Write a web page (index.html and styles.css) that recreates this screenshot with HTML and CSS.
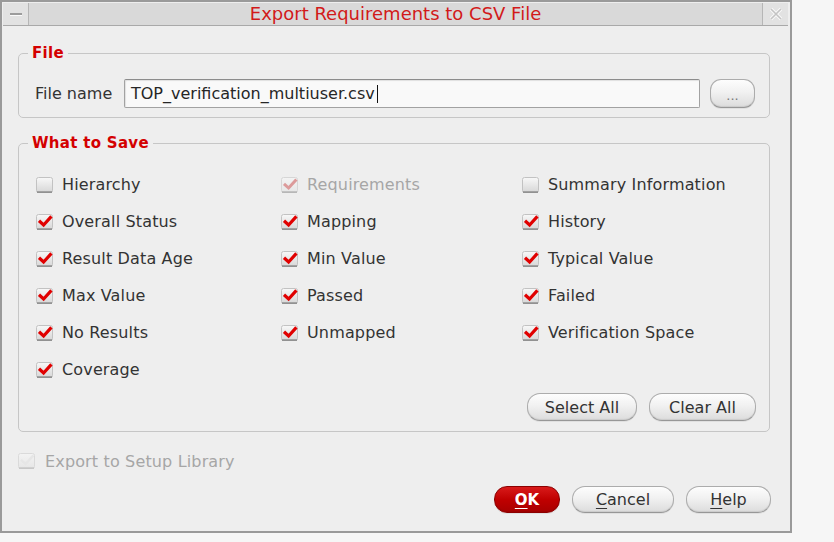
FILE: index.html
```html
<!DOCTYPE html>
<html lang="en">
<head>
<meta charset="utf-8">
<title>Export Requirements to CSV File</title>
<link rel="stylesheet" href="styles.css">
</head>
<body>
<svg class="defs" aria-hidden="true" width="0" height="0">
  <defs>
    <linearGradient id="g-cb" x1="0" y1="0" x2="0" y2="1">
      <stop offset="0" stop-color="#f8f8f8"/>
      <stop offset="1" stop-color="#d6d6d6"/>
    </linearGradient>
    <linearGradient id="g-cb-dis" x1="0" y1="0" x2="0" y2="1">
      <stop offset="0" stop-color="#f3f3f3"/>
      <stop offset="1" stop-color="#e6e6e6"/>
    </linearGradient>
    <symbol id="cb-off" viewBox="0 0 17 16">
      <rect x="0.5" y="0.5" width="16" height="15" rx="2" fill="url(#g-cb)" stroke="#c2c2c2"/>
      <path d="M1 15.1 H16" stroke="#8c8c8c" stroke-width="1.6"/>
    </symbol>
    <symbol id="cb-on" viewBox="0 0 17 16">
      <rect x="0.5" y="0.5" width="16" height="15" rx="2" fill="url(#g-cb)" stroke="#c2c2c2"/>
      <path d="M1 15.1 H16" stroke="#8c8c8c" stroke-width="1.6"/>
      <path d="M3 6.8 L7.6 11 L15.4 2.4" fill="none" stroke="#e00000" stroke-width="3.2"/>
    </symbol>
    <symbol id="cb-on-dis" viewBox="0 0 17 16">
      <rect x="0.5" y="0.5" width="16" height="15" rx="2" fill="url(#g-cb-dis)" stroke="#d6d6d6"/>
      <path d="M1 15.1 H16" stroke="#b4b4b4" stroke-width="1.6"/>
      <path d="M3 6.8 L7.6 11 L15.4 2.4" fill="none" stroke="#dc9a9a" stroke-width="3"/>
    </symbol>
    <symbol id="cb-off-dis" viewBox="0 0 17 16">
      <rect x="0.5" y="0.5" width="16" height="15" rx="2" fill="url(#g-cb-dis)" stroke="#dadada"/>
      <path d="M1 15.1 H16" stroke="#c6c6c6" stroke-width="1.6"/>
      <path d="M3 6.8 L7.6 11 L15.4 2.4" fill="none" stroke="#e6e6e6" stroke-width="2.4"/>
    </symbol>
  </defs>
</svg>

<div class="dialog">
  <div class="titlebar">
    <div class="tb-btn tb-min"><span class="min-glyph"></span></div>
    <div class="title">Export Requirements to CSV File</div>
    <div class="tb-btn tb-close">
      <svg width="16" height="16" viewBox="0 0 16 16"><path d="M3 3 L13 13 M13 3 L3 13" stroke="#fafafa" stroke-width="3.4"/><path d="M3 3 L13 13 M13 3 L3 13" stroke="#c4c4c4" stroke-width="1.6"/></svg>
    </div>
  </div>

  <div class="content">
    <fieldset class="group group-file">
      <legend>File</legend>
      <div class="file-row">
        <span class="field-label">File name</span>
        <div class="input"><span>TOP_verification_multiuser.csv</span><span class="caret"></span></div>
        <button class="btn btn-browse">...</button>
      </div>
    </fieldset>

    <fieldset class="group group-save">
      <legend>What to Save</legend>
      <div class="check-grid">
        <div class="check"><svg class="cb"><use href="#cb-off"/></svg><span>Hierarchy</span></div>
        <div class="check disabled"><svg class="cb"><use href="#cb-on-dis"/></svg><span>Requirements</span></div>
        <div class="check"><svg class="cb"><use href="#cb-off"/></svg><span>Summary Information</span></div>

        <div class="check"><svg class="cb"><use href="#cb-on"/></svg><span>Overall Status</span></div>
        <div class="check"><svg class="cb"><use href="#cb-on"/></svg><span>Mapping</span></div>
        <div class="check"><svg class="cb"><use href="#cb-on"/></svg><span>History</span></div>

        <div class="check"><svg class="cb"><use href="#cb-on"/></svg><span>Result Data Age</span></div>
        <div class="check"><svg class="cb"><use href="#cb-on"/></svg><span>Min Value</span></div>
        <div class="check"><svg class="cb"><use href="#cb-on"/></svg><span>Typical Value</span></div>

        <div class="check"><svg class="cb"><use href="#cb-on"/></svg><span>Max Value</span></div>
        <div class="check"><svg class="cb"><use href="#cb-on"/></svg><span>Passed</span></div>
        <div class="check"><svg class="cb"><use href="#cb-on"/></svg><span>Failed</span></div>

        <div class="check"><svg class="cb"><use href="#cb-on"/></svg><span>No Results</span></div>
        <div class="check"><svg class="cb"><use href="#cb-on"/></svg><span>Unmapped</span></div>
        <div class="check"><svg class="cb"><use href="#cb-on"/></svg><span>Verification Space</span></div>

        <div class="check"><svg class="cb"><use href="#cb-on"/></svg><span>Coverage</span></div>
      </div>
      <div class="group-actions">
        <button class="btn btn-select">Select All</button>
        <button class="btn btn-clear">Clear All</button>
      </div>
    </fieldset>

    <div class="check export disabled"><svg class="cb"><use href="#cb-off-dis"/></svg><span>Export to Setup Library</span></div>

    <div class="dialog-actions">
      <button class="btn btn-ok"><u>O</u>K</button>
      <button class="btn btn-cancel"><u>C</u>ancel</button>
      <button class="btn btn-help"><u>H</u>elp</button>
    </div>
  </div>
</div>
</body>
</html>
```

FILE: styles.css
```css
html, body {
  margin: 0;
  padding: 0;
  background: #f6f6f6;
}

.defs {
  position: absolute;
  width: 0;
  height: 0;
  overflow: hidden;
}

.dialog {
  width: 792px;
  height: 533px;
  box-sizing: border-box;
  border: 2px solid #9a9a9a;
  background: #eeeeee;
  display: flex;
  flex-direction: column;
  font-family: "DejaVu Sans", sans-serif;
}

.titlebar {
  display: flex;
  height: 22px;
  margin: 1px 2px 0 1px;
  background: #d9d9d9;
  border-bottom: 1px solid #a9a9a9;
}

.tb-btn {
  width: 25px;
  flex: none;
  display: flex;
  align-items: center;
  justify-content: center;
  background: #e2e2e2;
}

.tb-min {
  border-right: 1px solid #b6b6b6;
}

.tb-close {
  border-left: 1px solid #b6b6b6;
}

.min-glyph {
  display: block;
  width: 12px;
  height: 2px;
  background: #9c9c9c;
  border-bottom: 1px solid #fafafa;
}

.title {
  flex: 1;
  text-align: center;
  font-size: 18px;
  line-height: 22px;
  color: #d21a1a;
}

.content {
  flex: 1;
  display: flex;
  flex-direction: column;
  padding: 18px 20px 0 16px;
}

.group {
  margin: 0;
  border: 1px solid #c6c6c6;
  border-radius: 5px;
  min-width: 0;
}

.group legend {
  margin-left: -7px;
  padding: 0 4px;
  font-size: 15px;
  line-height: 18px;
  font-weight: bold;
  letter-spacing: 0.3px;
  color: #d40000;
}

.group-file {
  padding: 17px 13px 9px 16px;
}

.file-row {
  display: flex;
  align-items: center;
  height: 29px;
}

.field-label {
  width: 89px;
  flex: none;
  font-size: 16px;
  color: #333333;
}

.input {
  width: 576px;
  height: 29px;
  box-sizing: border-box;
  display: flex;
  align-items: center;
  padding-left: 6px;
  border: 1px solid #a2a2a2;
  border-top-color: #8c8c8c;
  border-radius: 2px;
  background: #f9f9f9;
  box-shadow: inset 1px 1px 1px rgba(0, 0, 0, 0.1);
  font-size: 16px;
  color: #262626;
}

.caret {
  width: 1px;
  height: 18px;
  margin-left: 2px;
  background: #111111;
}

.btn {
  box-sizing: border-box;
  height: 28px;
  padding: 0;
  border: 1px solid #acacac;
  border-bottom-color: #979797;
  border-radius: 13px;
  background: linear-gradient(#fdfdfd, #f1f1f1 45%, #dcdcdc);
  box-shadow: inset 0 -1px 1px rgba(0, 0, 0, 0.08), 0 1px 0 rgba(0, 0, 0, 0.06);
  font-family: "DejaVu Sans", sans-serif;
  font-size: 16px;
  color: #333333;
}

.btn u {
  text-underline-offset: 3px;
}

.btn-browse {
  width: 45px;
  height: 29px;
  margin-left: 10px;
  border-radius: 11px;
  font-size: 13px;
  color: #7a7a7a;
  padding-top: 4px;
}

.group-save {
  margin-top: 16px;
  padding: 14px 13px 10px 16px;
}

.check-grid {
  display: grid;
  grid-template-columns: 245px 241px 1fr;
  grid-auto-rows: 37px;
}

.check {
  display: flex;
  align-items: center;
  gap: 9px;
  font-size: 16px;
  letter-spacing: 0.15px;
  color: #333333;
}

.check-grid .check .cb {
  margin-left: 1px;
}

.cb {
  width: 17px;
  height: 16px;
  flex: none;
}

.check.disabled {
  color: #a6a6a6;
}

.group-actions {
  display: flex;
  justify-content: flex-end;
  gap: 12px;
  margin-top: 5px;
}

.btn-select {
  width: 110px;
}

.btn-clear {
  width: 107px;
}

.export {
  margin-top: 19px;
  height: 20px;
  gap: 10px;
}

.dialog-actions {
  display: flex;
  justify-content: flex-end;
  gap: 12px;
  margin-top: 15px;
  margin-right: -1px;
}

.dialog-actions .btn {
  height: 27px;
}

.btn-ok {
  width: 66px;
  border-color: #8c0000;
  background: linear-gradient(#d81a1a, #c00000 50%, #a80000);
  color: #ffffff;
  font-weight: bold;
  font-size: 15px;
}

.btn-cancel {
  width: 102px;
}

.btn-help {
  width: 85px;
}
```
